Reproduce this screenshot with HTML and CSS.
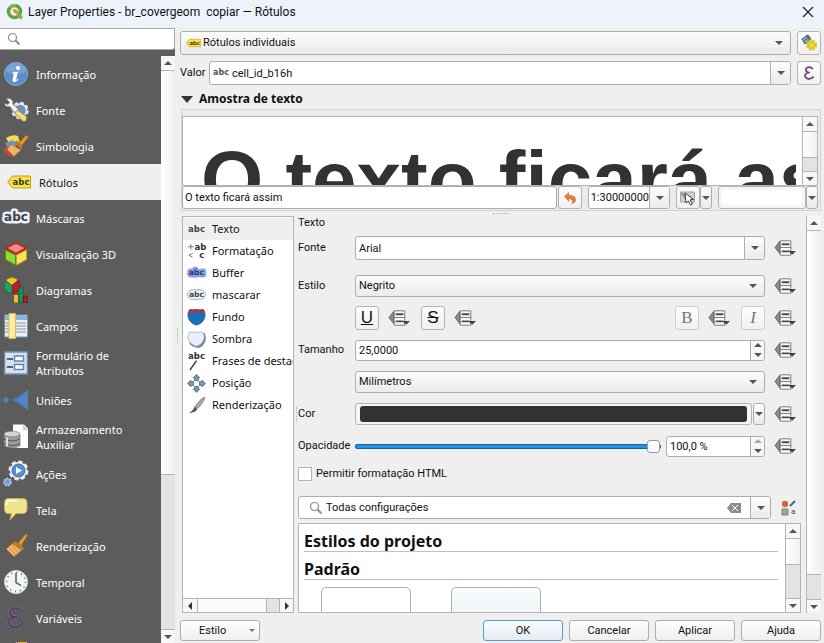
FILE: index.html
```html
<!DOCTYPE html>
<html lang="pt-BR">
<head>
<meta charset="utf-8">
<title>Layer Properties - br_covergeom copiar — Rótulos</title>
<link rel="stylesheet" href="styles.css">
</head>
<body>
<svg class="defs" aria-hidden="true">
  <symbol id="override" viewBox="0 0 24 18">
    <path d="M6 2 L1 8.500 L6 15Z" fill="#8a8a8a" stroke="#666"/>
    <path d="M6.500 1.500h11v15h-11z" fill="#fafafa" stroke="#777"/>
    <path d="M6 8.500h12" stroke="#777"/>
    <path d="M8 5h8M8 12.500h8" stroke="#4c4c4c" stroke-width="2"/>
    <path d="M15 12h8l-4 4z" fill="#444"/>
  </symbol>
  <symbol id="lens" viewBox="0 0 14 14">
    <circle cx="5.500" cy="5.500" r="4" fill="none" stroke="#8e8e8e" stroke-width="1.200"/>
    <path d="M8.500 8.500l4 4" stroke="#8e8e8e" stroke-width="2"/>
  </symbol>
  <symbol id="tag" viewBox="0 0 24 14">
    <path d="M5.500 1h18v12h-18L.8 7z" fill="#fbe14a" stroke="#c5a100"/>
    <circle cx="4" cy="7" r="1" fill="#fff" stroke="#c5a100" stroke-width=".5"/>
    <text x="14" y="10" font-size="8.500" text-anchor="middle" class="abc" fill="#3d3a20">abc</text>
  </symbol>
</svg>

<header class="titlebar">
  <svg width="18" height="18" viewBox="0 0 18 18">
    <circle cx="8.500" cy="8.500" r="6" fill="none" stroke="#62a43c" stroke-width="3.500"/>
    <path d="M3.500 5a6 6 0 0 1 6-3" fill="none" stroke="#93bd58" stroke-width="2"/>
    <path d="M9 9l3-.5 5 5.500-2.500 3z" fill="#80b14f"/>
    <path d="M6.500 6l4 .5 2 3-2 1.500-3-1.500z" fill="#ef8b35"/>
  </svg>
  <h1>Layer Properties - br_covergeom&nbsp; copiar — Rótulos</h1>
  <button class="close" aria-label="Fechar"><svg width="12" height="12" viewBox="0 0 12 12"><path d="M1 1l10 10M11 1L1 11" stroke="#222" stroke-width="1.200"/></svg></button>
</header>

<div class="window">
  <aside class="sidebar">
    <label class="side-search"><svg width="14" height="14"><use href="#lens"/></svg><input type="search" aria-label="Pesquisar"></label>
    <div class="side-body">
      <nav class="side-list">
        <a href="#"><svg viewBox="0 0 24 24"><circle cx="12" cy="12" r="11.500" fill="#5b8dc9" stroke="#84abd9"/><path d="M2 10a10 10 0 0 1 20 0q-10 4-20 0" fill="#78a3d6"/><circle cx="14" cy="6" r="2" fill="#fff"/><path d="M9 10.500l5-.8-2 8q1 0 2-1l.5.7q-3 3-5 2.500-1.500-.5-1-2.500l1.300-5.400-1.300-.3z" fill="#fff"/></svg><span>Informação</span></a>
        <a href="#"><svg viewBox="0 0 24 24"><circle cx="16" cy="12.500" r="7.500" fill="#6d91bd" stroke="#e4e8ec" stroke-width="2.500" stroke-dasharray="3.500 2.400"/><circle cx="16" cy="12.500" r="6.500" fill="none" stroke="#e4e8ec" stroke-width="1.500"/><path d="M2 .5q4-1 6 1.500 1.500 2 .8 4l6 6-3 3-6.200-6.500Q1 9.500.3 5l3.500 1.500 1.800-2z" fill="#f4f5f5" stroke="#666" stroke-width=".6"/><path d="M10.500 15l3-3 9.500 7-1 4-3 .5z" fill="#eedd7a" stroke="#8a742a" stroke-width=".8"/></svg><span>Fonte</span></a>
        <a href="#"><svg viewBox="0 0 24 24"><path d="M2 4q6-4 12-2l2 7-9 4z" fill="#f3dc57"/><path d="M-1 15l7-4 6 9-3 3Q2 21-1 15" fill="#d8403b"/><path d="M1 9l8-3 4 5-8 5z" fill="#6e93c8"/><path d="M7 10l10 6-7 6.500-7-7z" fill="#f0b366" stroke="#8d5b20" stroke-width=".6"/><path d="M10 8.500l3-2 5.500 5.500-1 4z" fill="#b8782d"/><path d="M15 9l7-8 2.500 2-7 9z" fill="#e9962d" stroke="#8b5b18" stroke-width=".5"/></svg><span>Simbologia</span></a>
        <a href="#" class="active"><svg viewBox="0 0 24 14"><use href="#tag"/></svg><span>Rótulos</span></a>
        <a href="#"><svg class="wide" viewBox="0 0 28 24"><text x="14" y="15" font-size="12" text-anchor="middle" class="abc" fill="#3a4148" stroke="#eceff6" stroke-width="5" stroke-linejoin="round" paint-order="stroke">abc</text></svg><span>Máscaras</span></a>
        <a href="#"><svg viewBox="0 0 24 24"><path d="M12-.5l11.500 6v13l-11.500 6-11.500-6v-13z" fill="#7d5c18"/><path d="M12 .8l10 5.200-10 5.700L2 6z" fill="#f08a88" stroke="#c61b1b" stroke-width="1.500"/><path d="M1.500 8l10 5v10l-10-5.500z" fill="#8edc35" stroke="#4e9120"/><path d="M22.500 8l-10 5v10l10-5.500z" fill="#f7e354" stroke="#b9a62c"/></svg><span>Visualização 3D</span></a>
        <a href="#"><svg viewBox="0 0 24 24"><path d="M8 7.500L2 2q6-5 12 0z" fill="#f7c928" stroke="#9c761a" stroke-width=".6"/><path d="M8 7.500L14.500 2q4 7-2.500 13H8z" fill="#b4202c" stroke="#6e1119" stroke-width=".6"/><path d="M8 7.500v8Q-2 14 1 3z" fill="#22a65b" stroke="#0e6131" stroke-width=".6"/><path d="M10 17h4v7.500h-4z" fill="#f9b81e"/><path d="M15 10h4v14.500h-4z" fill="#129b50" stroke="#075b2b" stroke-width=".6"/><path d="M19.500 18h4v6.500h-4z" fill="#b11e2c" stroke="#5c0c14" stroke-width=".6"/></svg><span>Diagramas</span></a>
        <a href="#"><svg viewBox="0 0 24 24"><path d="M.5 1h23v22H.5z" fill="#edf0f3" stroke="#6f94b7"/><path d="M1 1.500h22V6H1z" fill="#8db3da"/><path d="M11 9h11M11 12h11M11 15h11M11 18h11M1 9h4M1 12h4M1 15h4M1 18h4" stroke="#8b9299"/><path d="M5-.5h6.500v25H5z" fill="#f9ecaa" stroke="#d6c147"/></svg><span>Campos</span></a>
        <a href="#" class="two"><svg viewBox="0 0 24 24"><path d="M.7 1h22.600v22H.7z" fill="#d9e2ec" stroke="#6c92b8" stroke-width="1.300"/><path d="M3 8h6M3 16h6" stroke="#54616e" stroke-width="2"/><path d="M10.500 5h9v5h-9zM10.500 13.500h9v5h-9z" fill="#fff" stroke="#5e87b2" stroke-width="1.500"/></svg><span>Formulário de Atributos</span></a>
        <a href="#"><svg viewBox="0 0 24 24"><circle cx="2" cy="12" r="2.800" fill="#4f82bd"/><path d="M8 12L24 2v20z" fill="#4979b0"/><path d="M14 12l10-10v20z" fill="#5585bd"/></svg><span>Uniões</span></a>
        <a href="#" class="two"><svg viewBox="0 0 24 24"><path d="M9-.5h11l4 4V23H9z" fill="#fff"/><path d="M19-.5V5h5" fill="#ccc"/><path d="M0 9v12q8 4 16 0V9z" fill="#9b9b9b" stroke="#666" stroke-width=".6"/><ellipse cx="8" cy="9" rx="8" ry="2.800" fill="#d5d5d5" stroke="#777" stroke-width=".6"/><path d="M0 14q8 4 16 0M0 18.500q8 4 16 0" fill="none" stroke="#555"/><path d="M3 12.500v9" stroke="#ddd" stroke-width="2"/></svg><span>Armazenamento Auxiliar</span></a>
        <a href="#"><svg viewBox="0 0 24 24"><circle cx="14.500" cy="8.500" r="8.500" fill="#f1f1f1" stroke="#f1f1f1" stroke-width="3" stroke-dasharray="4 2.600"/><circle cx="14.500" cy="8.500" r="6.500" fill="#5c8fcd" stroke="#3d6fa9"/><path d="M12 5v7l6-3.500z" fill="#fff"/><circle cx="3.500" cy="20" r="3.500" fill="#71a0d5" stroke="#c9dcef" stroke-width="1.500" stroke-dasharray="2 1"/></svg><span>Ações</span></a>
        <a href="#"><svg viewBox="0 0 24 24"><path d="M4 .5h15q4 0 4 4v6q0 5-4 5h-7l-6 6.500 1.500-6.500H4q-3.500 0-3.500-5v-6q0-4 3.500-4z" fill="#efe390" stroke="#c6b24f"/><path d="M3 7V5q0-2.500 3-2.500h8" fill="none" stroke="#fff" stroke-width="1.500"/></svg><span>Tela</span></a>
        <a href="#"><svg viewBox="0 0 24 24"><path d="M14 9l7.500-9 2 1.500L17 12z" fill="#e7982f" stroke="#99601b" stroke-width=".6"/><path d="M9 9l9 7-8 7-8-8z" fill="#edb168" stroke="#946024" stroke-width=".6"/><path d="M11 7l9 7-2 3L8 10z" fill="#c17b25"/><path d="M5 14l7 7M8 12l7 7" stroke="#d8903a"/></svg><span>Renderização</span></a>
        <a href="#"><svg viewBox="0 0 24 24"><circle cx="12" cy="12" r="11.500" fill="#f1f5f2" stroke="#d7dad8"/><circle cx="12" cy="12" r="9.500" fill="none" stroke="#596367" stroke-width="1.500" stroke-dasharray="1 3.970"/><path d="M12 3v9.500l5 3" fill="none" stroke="#455157" stroke-width="1.400"/></svg><span>Temporal</span></a>
        <a href="#"><svg viewBox="0 0 24 24"><path d="M18 5Q12 0 7 4q-3 4 2 7h4M11 11q-7 1-6 6 2 6 8 4 4-1 5-4" fill="none" stroke="#8a6c95" stroke-width="3"/><path d="M18 5Q12 0 7 4q-3 4 2 7h4M11 11q-7 1-6 6 2 6 8 4 4-1 5-4" fill="none" stroke="#5b3866" stroke-width="2"/></svg><span>Variáveis</span></a>
        <a href="#" aria-label="Metadados"><svg viewBox="0 0 24 24"><path d="M8 3l5-3v8H8z" fill="#eee"/><path d="M14 0h9v8h-9z" fill="#e4bd2c"/></svg></a>
      </nav>
      <div class="scroll bare"><i class="up"></i><b class="thumb side-thumb"></b><i class="down"></i></div>
    </div>
  </aside>
  <div class="split-v"><span></span></div>

  <main>
    <div class="row top-row">
      <div class="select"><svg width="15" height="10"><use href="#tag"/></svg><select aria-label="Tipo de rótulo"><option>Rótulos individuais</option></select></div>
      <button class="square" aria-label="Configurações de posicionamento"><svg width="18" height="18" viewBox="0 0 18 18"><path d="M2 5l6-4 3 4-6 5zM6 1l5 7M3 8l6-5" fill="#8fb0c6" stroke="#355a73"/><circle cx="11.500" cy="11" r="4" fill="#f5dc36" stroke="#e3c31c" stroke-width="3" stroke-dasharray="2.200 1"/><circle cx="11.500" cy="11" r="3" fill="#fbe94a" stroke="#c6a516" stroke-width=".7"/><circle cx="11.500" cy="11" r="1" fill="#fff" stroke="#b39410" stroke-width=".6"/></svg></button>
    </div>
    <div class="row top-row">
      <label for="valor">Valor</label>
      <div class="combo"><span class="abc tiny">abc</span><input id="valor" value="cell_id_b16h"><button class="arrow" aria-label="Abrir"></button></div>
      <button class="square" aria-label="Expressão"><svg width="14" height="16" viewBox="0 0 14 16"><path d="M11 4Q8 1 4.500 3q-2 2.500 1.500 4.500h2M7 7.500q-5 1-4 4 2 3.500 5.500 2 2-.5 3-2" fill="none" stroke="#6b4375" stroke-width="1.700"/></svg></button>
    </div>
    <h2 class="group-title"><i></i>Amostra de texto</h2>
    <section class="sample">
      <div class="preview">
        <div class="preview-text">O texto ficará assim</div>
        <div class="scroll"><i class="up"></i><b class="thumb preview-thumb"></b><i class="down"></i></div>
      </div>
      <div class="sample-row">
        <input class="field grow" aria-label="Texto de amostra" value="O texto ficará assim">
        <button class="square" aria-label="Restaurar"><svg width="14" height="14" viewBox="0 0 14 14"><path d="M1 5.500L6 1v3q7 0 7 5 0 3-5 4 2-2 1-3.500Q8 8 6 8v3z" fill="#dd7f41"/></svg></button>
        <div class="combo scale"><input aria-label="Escala" value="1:30000000"><button class="arrow" aria-label="Abrir"></button></div>
        <div class="pair tight"><button class="square" aria-label="Usar tela"><svg width="18" height="16" viewBox="0 0 18 16"><path d="M1.500 2h14v10h-14z" fill="#cbd0d4" stroke="#9da4aa"/><path d="M2.500 3l7 8" stroke="#8b98a3" stroke-width="2.500"/><path d="M6 3l8.500 6.500-3.500.3 2.500 4.200-2 1-2.200-4L7 13z" fill="#fff" stroke="#222" stroke-width=".9"/></svg></button><button class="arrow thin" aria-label="Abrir"></button></div>
        <div class="pair tight"><button class="colorbox" aria-label="Cor de fundo"><span class="white"></span></button><button class="arrow thin" aria-label="Abrir"></button></div>
      </div>
    </section>
    <div class="split-h"><span></span></div>

    <div class="lower">
      <div class="cats">
        <nav>
          <a href="#" class="on"><svg viewBox="0 0 20 20"><text x="10" y="13" class="abc" font-size="9" text-anchor="middle" fill="#444">abc</text></svg>Texto</a>
          <a href="#"><svg viewBox="0 0 20 20"><path d="M1 5h6M4 2v6M6 12l-4 2 4 2" stroke="#777" fill="none"/><text x="8" y="8" class="abc" font-size="9" fill="#333">ab</text><text x="13" y="17" class="abc" font-size="9" fill="#333">c</text></svg>Formatação</a>
          <a href="#"><svg viewBox="0 0 20 20"><text x="10" y="12" class="abc" font-size="8" text-anchor="middle" fill="#2c3a66" stroke="#86a0ea" stroke-width="5" stroke-linejoin="round" paint-order="stroke">abc</text></svg>Buffer</a>
          <a href="#"><svg viewBox="0 0 20 20"><rect x=".5" y="4" width="19" height="10" rx="5" fill="#eef2f7" stroke="#a3adba"/><text x="10" y="12" class="abc" font-size="8" text-anchor="middle" fill="#444b54">abc</text></svg>mascarar</a>
          <a href="#"><svg viewBox="0 0 20 20"><path d="M3 1.500q3 1 7 0 4 1 7 0 2.500 3 2 6.500-1 8-9 10Q2 16 1 8q-.5-3.500 2-6.500z" fill="#1270bd" stroke="#4a5a74"/><path d="M3 1.500q3 1 7 0 4 1 7 0l1.500 3h-17z" fill="#c4283b"/></svg>Fundo</a>
          <a href="#"><svg viewBox="0 0 20 20"><path d="M5 4q3 1 6 0 4 1 7.500-1 2 4 1 8-2 7-8 8-7-1-9-5z" fill="#737e90"/><path d="M3 2q3 1 6 0 4 1 7 0 2.500 3 2 6-1 7-8 9-8-2-9-9-.5-3 2-6z" fill="#e9effb" stroke="#adb8cc"/></svg>Sombra</a>
          <a href="#"><svg viewBox="0 0 20 20"><text x="10" y="7" class="abc" font-size="9" text-anchor="middle" fill="#333">abc</text><path d="M10 9L3 19" stroke="#333" stroke-width="1.500"/></svg>Frases de destaque</a>
          <a href="#"><svg viewBox="0 0 20 20"><path d="M10 .5l3.500 3.500h-1.500v3h-4v-3H6.500zM10 19.500l3.500-3.500h-1.500v-3h-4v3H6.500zM.5 10l3.500-3.500v1.500h3v4h-3v1.500zM19.500 10l-3.500-3.500v1.500h-3v4h3v1.500z" fill="#779aaf" stroke="#47667c" stroke-width=".8"/></svg>Posição</a>
          <a href="#"><svg viewBox="0 0 20 20"><path d="M18.500 1q1 3-7 12l-3-2Q14 3 18.500 1z" fill="#aaa" stroke="#666" stroke-width=".7"/><path d="M8 11l3 3q-3 4-9 4 4-2 6-7z" fill="#555"/></svg>Renderização</a>
        </nav>
        <div class="hscroll"><i class="left"></i><b></b><i class="right"></i></div>
      </div>
      <div class="split-v mini"><span></span></div>

      <form class="props">
        <p>Texto</p>
        <div class="grid">
          <label for="fonte">Fonte</label>
          <div class="combo"><input id="fonte" value="Arial"><button type="button" class="arrow" aria-label="Abrir"></button></div>
          <button type="button" class="dd" aria-label="Definir fonte"><svg><use href="#override"/></svg></button>
        </div>
        <div class="grid first-gap">
          <label for="estilo">Estilo</label>
          <div class="select low"><select id="estilo"><option>Negrito</option></select></div>
          <button type="button" class="dd" aria-label="Definir estilo"><svg><use href="#override"/></svg></button>

          <div class="styles">
            <button type="button" class="square letter u">U</button><button type="button" class="dd" aria-label="Definir sublinhado"><svg><use href="#override"/></svg></button>
            <button type="button" class="square letter s">S</button><button type="button" class="dd" aria-label="Definir tachado"><svg><use href="#override"/></svg></button>
            <button type="button" class="square letter off push">B</button><button type="button" class="dd" aria-label="Definir negrito"><svg><use href="#override"/></svg></button>
            <button type="button" class="square letter off it">I</button>
          </div>
          <button type="button" class="dd" aria-label="Definir itálico"><svg><use href="#override"/></svg></button>

          <label for="tam">Tamanho</label>
          <div class="spin"><input id="tam" value="25,0000"><span><button type="button" class="su" aria-label="Aumentar"></button><button type="button" class="sd" aria-label="Diminuir"></button></span></div>
          <button type="button" class="dd" aria-label="Definir tamanho"><svg><use href="#override"/></svg></button>

          <div class="select low mid"><select aria-label="Unidade"><option>Milímetros</option></select></div>
          <button type="button" class="dd" aria-label="Definir unidade"><svg><use href="#override"/></svg></button>

          <label for="cor">Cor</label>
          <div class="pair wide"><button type="button" id="cor" class="colorbox"><span class="dark"></span></button><button type="button" class="arrow thin" aria-label="Abrir"></button></div>
          <button type="button" class="dd" aria-label="Definir cor"><svg><use href="#override"/></svg></button>

          <label for="opac">Opacidade</label>
          <div class="opacity"><input id="opac" type="range" min="0" max="100" value="100"><div class="spin"><input aria-label="Opacidade em %" value="100,0 %"><span><button type="button" class="su dim" aria-label="Aumentar"></button><button type="button" class="sd" aria-label="Diminuir"></button></span></div></div>
          <button type="button" class="dd" aria-label="Definir opacidade"><svg><use href="#override"/></svg></button>
        </div>
        <label class="check"><input type="checkbox">Permitir formatação HTML</label>
        <div class="find">
          <div class="combo"><svg width="14" height="14"><use href="#lens"/></svg><input aria-label="Filtrar estilos" value="Todas configurações"><svg class="clear" width="14" height="10" viewBox="0 0 14 10"><path d="M4 0h10v10H4L0 5z" fill="#8c8c8c"/><path d="M5 2l6 6M11 2L5 8" stroke="#fff"/></svg><button type="button" class="arrow" aria-label="Abrir"></button></div>
          <button type="button" class="manager" aria-label="Gerenciador de estilos"><svg width="16" height="16" viewBox="0 0 16 16"><circle cx="4" cy="4" r="3.200" fill="#c9693f"/><path d="M9 6l5-5" stroke="#46658c" stroke-width="2"/><path d="M1 9h6v6H1z" fill="#85b38b" stroke="#65916b"/><text x="10" y="14" font-size="8" fill="#444">a</text></svg></button>
        </div>
        <div class="gallery">
          <div class="gal-body">
            <h3>Estilos do projeto</h3>
            <h3>Padrão</h3>
            <div class="thumbs"><span></span><span class="tint"></span></div>
          </div>
          <div class="scroll"><i class="up"></i><b class="thumb gal-thumb"></b><i class="down"></i></div>
        </div>
      </form>
      <div class="scroll open"><i class="up"></i><b class="thumb main-thumb"></b><i class="down"></i></div>
    </div>

    <footer>
      <button class="btn menu">Estilo<i></i></button>
      <button class="btn ok">OK</button>
      <button class="btn">Cancelar</button>
      <button class="btn">Aplicar</button>
      <button class="btn">Ajuda</button>
    </footer>
  </main>
</div>
</body>
</html>
```
FILE: styles.css
```css
* { box-sizing: border-box; }

body {
  margin: 0;
  height: 100vh;
  display: flex;
  flex-direction: column;
  overflow: hidden;
  background: #efefef;
  color: #111;
  font: 11px/14px Roboto, sans-serif;
}

button, input, select { font: inherit; color: inherit; margin: 0; padding: 0; border: 0; background: none; outline: 0; min-width: 0; }
h1, h2, h3, p { margin: 0; font-size: inherit; }
a { color: inherit; text-decoration: none; }
svg { flex: none; display: block; overflow: visible; }
.defs { width: 0; height: 0; position: absolute; }
.abc { font-family: "DejaVu Sans", sans-serif; font-weight: bold; }

/* title bar */
.titlebar {
  flex: none;
  height: 28px;
  display: flex;
  align-items: center;
  gap: 4px;
  padding: 0 9px 4px 6px;
  background: #eef3fb;
}
.titlebar h1 { flex: 1; font-size: 12px; font-weight: normal; }
.close { padding: 1px; }

.window { flex: 1; min-height: 0; display: flex; }

/* sidebar */
.sidebar { width: 175px; flex: none; display: flex; flex-direction: column; background: #5c5c5c; }
.side-search {
  flex: none;
  height: 22px;
  margin-bottom: 6px;
  display: flex;
  align-items: center;
  gap: 6px;
  padding: 0 7px;
  background: #fff;
  border: 1px solid #aaa;
  border-width: 1px 1px 1px 0;
  border-radius: 0 0 3px 0;
}
.side-search input { flex: 1; }
.side-body { flex: 1; min-height: 0; display: flex; }
.side-list { flex: 1; overflow: hidden; color: #fff; font-family: "Noto Sans", sans-serif; line-height: 15px; }
.side-list a { display: flex; align-items: center; gap: 8px; height: 36px; padding-left: 4px; }
.side-list a.two { height: 38px; }
.side-list a.two span { width: 100px; }
.side-list svg { width: 24px; height: 24px; }
.side-list svg.wide { width: 28px; margin: 0 -2px; }
.side-list .active { background: #efefef; color: #111; padding-left: 7px; }

/* scroll bars */
.scroll {
  flex: none;
  width: 15px;
  display: flex;
  flex-direction: column;
  background: #e3e3e3;
  border-left: 1px solid #b4b4b4;
}
.scroll.bare { width: 14px; border-left: 0; }
.scroll i, .hscroll i { flex: none; height: 14px; display: grid; place-items: center; background: #f7f7f7; }
.scroll i::before { content: ""; border: 4px solid transparent; border-top-width: 0; border-bottom: 4px solid #555; }
.scroll i.down::before { border-bottom-width: 0; border-top: 4px solid #555; }
.thumb { background: linear-gradient(90deg, #fff, #f0f0f0); border: 1px solid #b4b4b4; border-width: 1px 0; }
.thumb + .down { margin-top: auto; border-top: 1px solid #b4b4b4; }
.side-thumb { height: 69%; }
.preview-thumb { height: 40%; }
.gal-thumb { height: 31%; }
.main-thumb { height: 87%; }

/* splitter grips */
.split-v { flex: none; width: 5px; display: flex; align-items: center; }
.split-v span { height: 16px; margin-left: 2px; border-left: 1px dotted #b5b5b5; }
.split-v.mini { width: 4px; }
.split-h { flex: none; height: 5px; display: flex; justify-content: center; }
.split-h span { width: 16px; height: 0; margin-top: 2px; border-top: 1px dotted #b5b5b5; }

/* main column */
main { flex: 1; min-width: 0; display: flex; flex-direction: column; padding: 3px 3px 2px 0; }
.row { flex: none; display: flex; align-items: center; gap: 6px; }
.top-row { margin-bottom: 6px; }
.top-row label { width: 23px; }

.select, .combo, .spin, .field {
  height: 24px;
  display: flex;
  align-items: center;
  border: 1px solid #adadad;
  border-radius: 3px;
  background: #fff;
}
.select, .combo { flex: 1; min-width: 0; }
.select { position: relative; background: linear-gradient(#fcfcfc, #ebebeb); padding-left: 5px; gap: 2px; }
.select select { flex: 1; height: 100%; appearance: none; }
.select.low { height: 22px; padding-left: 3px; }
.select::after { content: ""; position: absolute; right: 7px; border: 4px solid transparent; border-bottom-width: 0; border-top-color: #555; pointer-events: none; }
.combo input, .spin input { flex: 1; width: 0; height: 100%; padding-left: 3px; }
.field { padding: 0 2px; }
.tiny { font-size: 8px; color: #555; padding-left: 3px; }

.arrow { flex: none; width: 20px; align-self: stretch; border-left: 1px solid #adadad; border-radius: 0 2px 2px 0; background: linear-gradient(#fcfcfc, #ebebeb); display: grid; place-items: center; }
.arrow::before { content: ""; border: 4px solid transparent; border-bottom-width: 0; border-top-color: #555; }
.arrow.thin { width: 12px; border: 1px solid #adadad; border-radius: 3px; }

.square {
  flex: none;
  width: 24px;
  height: 24px;
  display: grid;
  place-items: center;
  border: 1px solid #b4b4b4;
  border-radius: 3px;
  background: linear-gradient(#fdfdfd, #f0f0f0);
}

.group-title { flex: none; height: 16px; display: flex; align-items: center; gap: 6px; margin: 0 0 2px 1px; font: bold 12px/16px "Noto Sans", sans-serif; }
.group-title i { border: 6px solid transparent; border-bottom-width: 0; border-top: 7px solid #333; }

.sample { flex: none; margin-left: 1px; padding: 6px 2px 1px 0; border: 1px solid #d2d2d2; background: #ebebeb; }
.preview { height: 70px; display: flex; border: 1px solid #b4b4b4; background: #fff; }
.preview-text { flex: 1; margin-right: 6px; padding: 17px 0 0 18px; overflow: hidden; white-space: nowrap; font: bold 80px/92px "Liberation Sans", Arial, sans-serif; color: #323232; }
.sample-row { display: flex; gap: 6px; }
.sample-row > .square { margin-left: -5px; }
.sample-row .square, .sample-row .combo, .sample-row .field, .sample-row .colorbox { height: 23px; }
.grow { flex: 1; }
.scale { flex: none; width: 82px; }
.scale input { padding-left: 0; direction: rtl; text-align: right; }
.pair { display: flex; gap: 1px; }
.pair.tight { gap: 0; }
.pair.wide { flex: 1; height: 22px; }
.colorbox { width: 88px; padding: 3px; display: flex; border: 1px solid #b4b4b4; border-radius: 3px; background: #f5f5f5; }
.pair.wide .colorbox { flex: 1; padding: 2px 4px; }
.colorbox span { flex: 1; align-self: stretch; border-radius: 3px; }
.white { background: #fff; }
.dark { background: #323232; }

/* lower area */
.lower { flex: 1; min-height: 0; display: flex; padding-left: 2px; }
.cats { flex: none; width: 112px; display: flex; flex-direction: column; justify-content: space-between; border: 1px solid #b4b4b4; background: #fff; }
.cats nav { overflow: hidden; font-family: "Noto Sans", sans-serif; padding-top: 1px; }
.cats a { display: flex; align-items: center; gap: 6px; height: 22px; padding-left: 4px; white-space: nowrap; }
.cats svg { width: 19px; height: 19px; }
.cats .on { background: #efefef; }
.hscroll { flex: none; display: flex; height: 14px; background: #e3e3e3; border-top: 1px solid #b4b4b4; }
.hscroll i { width: 14px; height: 13px; }
.hscroll i::before { content: ""; border: 4px solid transparent; border-left-width: 0; border-right-color: #333; }
.hscroll i.right::before { border: 4px solid transparent; border-right-width: 0; border-left-color: #333; }
.hscroll b { width: 70px; border: 1px solid #b4b4b4; border-width: 0 1px; background: #fafafa; }
.hscroll .right { margin-left: auto; border-left: 1px solid #b4b4b4; }

.props { flex: 1; min-width: 0; display: flex; flex-direction: column; padding-right: 5px; }
.props p { flex: none; height: 16px; }
.grid { flex: none; display: grid; grid-template-columns: 57px 1fr 32px; grid-auto-rows: 32px; align-items: center; padding-right: 4px; }
.grid > .dd { justify-self: end; }
.first-gap { margin-top: 6px; }
.mid, .styles { grid-column: 2; }
.dd svg { width: 23px; height: 18px; }
.styles { display: flex; align-items: center; }
.styles .dd { margin: 0 10px 0 9px; }
.push { margin-left: auto; }
.letter { font: 17px/20px "Liberation Sans", sans-serif; }
.u { text-decoration: underline; }
.s { text-decoration: line-through; }
.off { font-family: "Liberation Serif", serif; color: #777; border-color: #ccc; }
.it { font-style: italic; }
.spin { height: 21px; }
.spin span { width: 14px; align-self: stretch; display: grid; border-left: 1px solid #adadad; background: #f7f7f7; border-radius: 0 3px 3px 0; }
.spin button { display: grid; place-items: center; }
.spin button::before { content: ""; border: 4px solid transparent; }
.spin .su::before { border-top-width: 0; border-bottom-color: #555; }
.spin .sd::before { border-bottom-width: 0; border-top-color: #555; }
.spin .dim::before { border-bottom-color: #aaa; }
.opacity { display: flex; align-items: center; gap: 5px; }
.opacity .spin { width: 99px; }
.opacity > input { flex: 1; height: 14px; appearance: none; }
.opacity > input::-webkit-slider-runnable-track { height: 5px; border: 1px solid #1563a3; border-radius: 2px; background: #2290e4; }
.opacity > input::-webkit-slider-thumb { appearance: none; width: 13px; height: 13px; margin-top: -5px; border: 1px solid #999; border-radius: 3px; background: #fafafa; }

.check { flex: none; display: flex; align-items: center; gap: 4px; height: 24px; }
.check input { appearance: none; width: 14px; height: 14px; border: 1px solid #b4b4b4; background: #fff; }
.find { flex: none; display: flex; align-items: center; gap: 10px; margin: 10px 4px 4px 0; }
.find .combo { height: 23px; padding-left: 10px; }
.clear { margin-right: 9px; }

.gallery { flex: 1; min-height: 0; display: flex; border: 1px solid #b4b4b4; background: #fff; }
.gal-body { flex: 1; overflow: hidden; padding: 4px 7px 0 5px; }
.gal-body h3 { height: 24px; margin-bottom: 4px; border-bottom: 1px solid #c0c0c0; font: bold 16px/26px "Noto Sans", sans-serif; }
.thumbs { display: flex; gap: 40px; padding: 3px 17px; }
.thumbs span { width: 90px; height: 60px; border: 1px solid #b0b0b0; border-radius: 5px; }
.tint { background: linear-gradient(#fafcfd, #dfebf1); }

/* dialog buttons */
footer { flex: none; display: flex; justify-content: flex-end; gap: 6px; padding-top: 7px; }
.btn { width: 80px; height: 21px; border: 1px solid #adadad; border-radius: 3px; background: linear-gradient(#fefefe, #efefef); }
.ok { border-color: #5b9bd5; background: linear-gradient(#f8fbfd, #e4ecf3); }
.menu { display: flex; align-items: center; justify-content: space-between; margin-right: auto; padding: 0 4px 0 18px; }
.menu i { border: 3px solid transparent; border-bottom-width: 0; border-top-color: #777; }
```
